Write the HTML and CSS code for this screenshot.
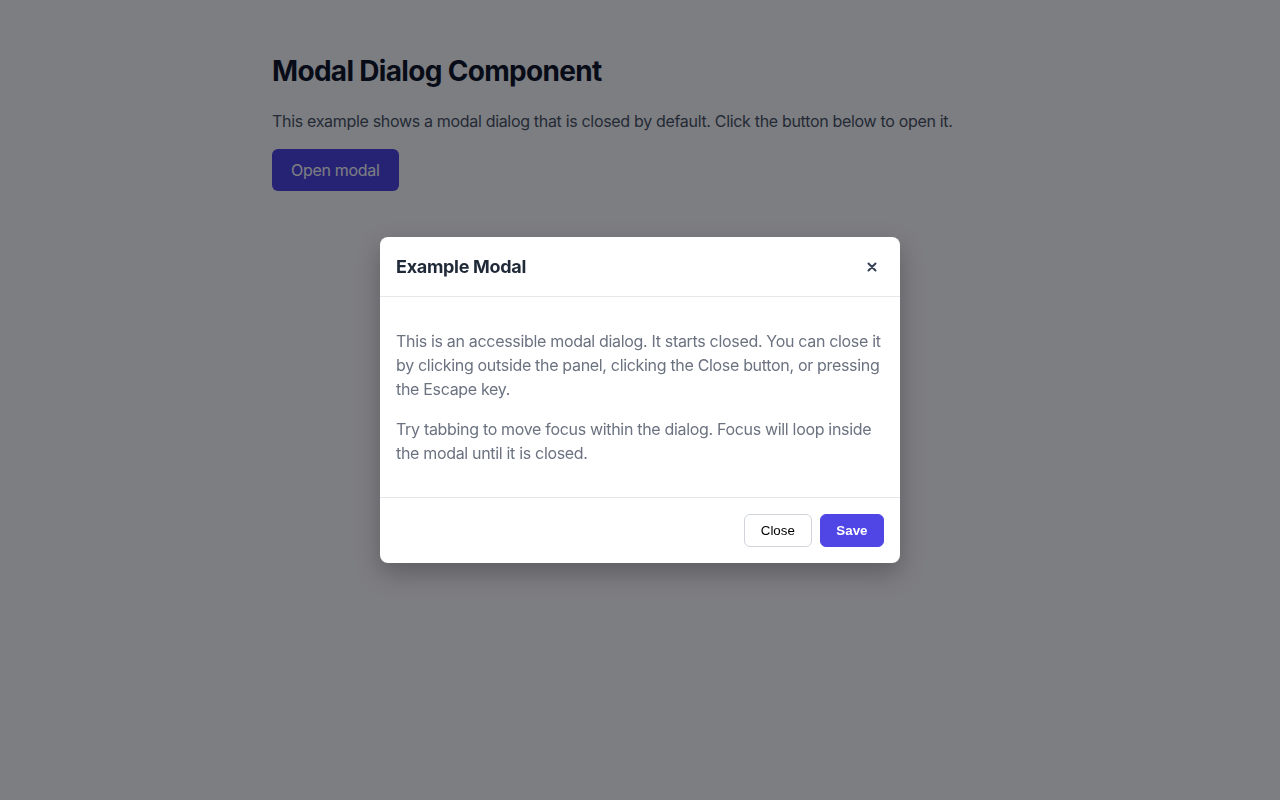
FILE: index.html
```html
<!DOCTYPE html>
<html lang="en">
<head>
<meta charset="utf-8">
<title>Modal Dialog Component</title>
<link rel="stylesheet" href="styles.css">
</head>
<body>
<main class="container">
  <h1 class="title">Modal Dialog Component</h1>
  <p class="lead">This example shows a modal dialog that is closed by default. Click the button below to open it.</p>
  <button class="btn-open" type="button">Open modal</button>
</main>
<div class="overlay">
  <div class="modal" role="dialog" aria-modal="true" aria-labelledby="modal-title">
    <div class="modal-header">
      <h2 class="modal-title" id="modal-title">Example Modal</h2>
      <button class="modal-x" type="button" aria-label="Close">
        <svg width="10" height="10" viewBox="0 0 10 10" aria-hidden="true"><path d="M1.5 1.5 L8.5 8.5 M8.5 1.5 L1.5 8.5" stroke="currentColor" stroke-width="2" stroke-linecap="round" fill="none"/></svg>
      </button>
    </div>
    <div class="modal-body">
      <p>This is an accessible modal dialog. It starts closed. You can close it by clicking outside the panel, clicking the Close button, or pressing the Escape key.</p>
      <p>Try tabbing to move focus within the dialog. Focus will loop inside the modal until it is closed.</p>
    </div>
    <div class="modal-footer">
      <button class="btn btn-secondary" type="button">Close</button>
      <button class="btn btn-primary" type="button">Save</button>
    </div>
  </div>
</div>
</body>
</html>
```
FILE: styles.css
```css
* { box-sizing: border-box; }
html, body { margin: 0; height: 100%; }
body {
  font-family: Inter, "Noto Sans", sans-serif;
  background: #ffffff;
  color: #111827;
}
.container {
  max-width: 768px;
  margin: 0 auto;
  padding: 48px 16px;
}
.title {
  font-size: 28px;
  line-height: 36px;
  font-weight: 700;
  margin: 5px 0 20px;
  letter-spacing: -0.68px;
}
.lead {
  font-size: 16px;
  line-height: 24px;
  color: #4b5563;
  margin: 0 0 16px;
  letter-spacing: -0.32px;
}
.btn-open {
  font-family: Inter, "Noto Sans", sans-serif;
  font-size: 16px;
  line-height: 24px;
  letter-spacing: -0.3px;
  padding: 9px 19px;
  background: #4f46e5;
  color: #ffffff;
  border: 0;
  border-radius: 6px;
}
.overlay {
  position: fixed;
  inset: 0;
  background: rgba(0, 2, 10, 0.51);
  display: flex;
  justify-content: center;
  align-items: flex-start;
  padding-top: 237px;
}
.modal {
  width: 520px;
  background: #ffffff;
  border-radius: 8px;
  box-shadow: 0 10px 25px rgba(0, 0, 0, 0.25);
  overflow: hidden;
}
.modal-header {
  display: flex;
  align-items: center;
  justify-content: space-between;
  padding: 16px 16px 15px;
  border-bottom: 1px solid #e5e7eb;
}
.modal-title {
  margin: 0;
  font-size: 18px;
  line-height: 28px;
  font-weight: 700;
  color: #1f2937;
  letter-spacing: -0.3px;
}
.modal-x {
  width: 24px;
  height: 24px;
  padding: 0;
  border: 0;
  background: transparent;
  color: #334155;
  display: flex;
  align-items: center;
  justify-content: center;
}
.modal-body {
  padding: 16px;
  color: #6b7280;
  font-size: 16px;
  line-height: 24px;
  letter-spacing: -0.32px;
}
.modal-body p { margin: 16px 0; }
.modal-footer {
  display: flex;
  justify-content: flex-end;
  gap: 8px;
  padding: 16px;
  border-top: 1px solid #e5e7eb;
}
.btn {
  font-family: "Liberation Sans", Arial, sans-serif;
  font-size: 13.33px;
  line-height: 15px;
  height: 33px;
  padding: 0 16px;
  border-radius: 6px;
}
.btn-secondary {
  background: #ffffff;
  border: 1px solid #d1d5db;
  color: #000000;
}
.btn-primary {
  background: #4f46e5;
  border: 1px solid #4f46e5;
  color: #ffffff;
  font-weight: 700;
  padding: 0 15.5px;
}
```
